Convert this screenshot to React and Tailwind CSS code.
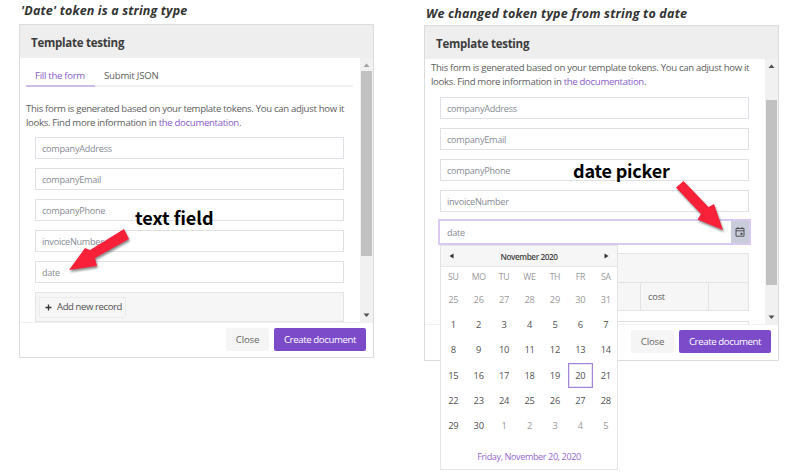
import clsx from "clsx";

const FIELDS = ["companyAddress", "companyEmail", "companyPhone", "invoiceNumber"];
const WEEKDAYS = ["SU", "MO", "TU", "WE", "TH", "FR", "SA"];

// October 25 .. December 5
const DAYS = [
  ...[25, 26, 27, 28, 29, 30, 31].map((day) => ({ day, other: true })),
  ...Array.from({ length: 30 }, (_, i) => ({ day: i + 1, other: false })),
  ...[1, 2, 3, 4, 5].map((day) => ({ day, other: true })),
];

function Field({ name }) {
  return (
    <div className="flex h-[22px] shrink-0 items-center border border-[#dfe0e5] bg-white pt-px pl-[6px] text-[9.1px] tracking-[-0.25px] text-[#868b94]">
      {name}
    </div>
  );
}

function Intro() {
  return (
    <p className="text-[9.6px] leading-[14px] tracking-[-0.32px] whitespace-nowrap text-[#606060]">
      <span className="block">
        This form is generated based on your template tokens. You can adjust how it
      </span>
      <span className="block">
        looks. Find more information in <a className="text-[#8a5cc9]">the documentation</a>.
      </span>
    </p>
  );
}

function Scrollbar({ top, upColor }) {
  return (
    <div className="flex w-[13px] shrink-0 flex-col bg-[#f1f1f1]">
      <svg viewBox="0 0 13 13" className="h-[13px] w-[13px] shrink-0">
        <path d="M3.5 9 L6.5 5.5 L9.5 9 Z" fill={upColor} />
      </svg>
      <div className={clsx("mx-px h-[185px] shrink-0 bg-[#c1c1c1]", top)} />
      <svg viewBox="0 0 13 13" className="mt-auto h-[13px] w-[13px] shrink-0">
        <path d="M3.5 4.5 L6.5 8 L9.5 4.5 Z" fill="#505050" />
      </svg>
    </div>
  );
}

function Footer() {
  return (
    <div className="flex flex-1 items-start justify-end gap-[5px] border-t border-[#f0f0f0] pt-[5px] pr-[7px]">
      <button className="h-[23px] w-[43px] rounded-[2px] bg-[#f5f5f5] pt-[2px] text-[9.7px] tracking-[-0.2px] text-[#666]">
        Close
      </button>
      <button className="h-[23px] w-[92px] rounded-[2px] bg-[#7b4bc9] pt-[2px] text-[9.7px] tracking-[-0.42px] whitespace-nowrap text-white">
        Create document
      </button>
    </div>
  );
}

function Window({ height, body, scroll, children }) {
  return (
    <div className={clsx("flex w-[355px] flex-col border border-[#dcdcdc] bg-white", height)}>
      <div className="flex h-[33px] shrink-0 items-center bg-[#eee] pt-[2px] pl-[11px] text-[11.5px] font-bold tracking-[-0.26px] text-[#3c3c3c]">
        Template testing
      </div>
      <div className={clsx("flex shrink-0 overflow-hidden", body)}>
        <div className="min-w-0 flex-1">{children}</div>
        {scroll}
      </div>
      <Footer />
    </div>
  );
}

function Calendar() {
  return (
    <div className="absolute top-[245px] left-[440px] flex h-[225px] w-[178px] flex-col border border-[#e4e4e4] bg-white">
      <div className="flex h-[21px] items-center justify-between border-b border-[#e8e8e8] bg-[#f6f6f6] px-[8px] text-[8.2px] text-[#444]">
        <svg viewBox="0 0 5 6" className="h-[6px] w-[5px]">
          <path d="M4.5 0.5 V5.5 L0.5 3 Z" fill="#333" />
        </svg>
        <span className="pt-px leading-[16px] font-semibold tracking-[-0.42px]">November 2020</span>
        <svg viewBox="0 0 5 6" className="h-[6px] w-[5px]">
          <path d="M0.5 0.5 V5.5 L4.5 3 Z" fill="#333" />
        </svg>
      </div>
      <div className="-ml-[0.5px] grid w-[178px] grid-cols-7 text-center text-[8.7px] leading-[20px] tracking-[-0.3px] text-[#999]">
        {WEEKDAYS.map((d) => (
          <span key={d}>{d}</span>
        ))}
      </div>
      <div className="-ml-[0.5px] grid h-[152px] w-[178px] grid-cols-7 grid-rows-6 text-[9.3px] tracking-[-0.25px]">
        {DAYS.map(({ day, other }, i) => (
          <span
            key={i}
            className={clsx(
              "flex items-center justify-center",
              other ? "text-[#999]" : "text-[#505050]",
              !other && day === 20 && "border border-[#a384d6] shadow-[inset_0_0_0_1px_#e9e1f5]"
            )}
          >
            {day}
          </span>
        ))}
      </div>
      <a className="mt-[8px] text-center text-[9.1px] leading-[20px] tracking-[-0.4px] text-[#9569cf]">Friday, November 20, 2020</a>
    </div>
  );
}

function RedArrow({ className, d, viewBox }) {
  return (
    <svg viewBox={viewBox} className={clsx("absolute drop-shadow-[1px_2px_1px_rgba(0,0,0,0.45)]", className)}>
      <path d={d} fill="#f9203a" />
    </svg>
  );
}

function Label({ className, children }) {
  return (
    <span
      className={clsx(
        "absolute font-['Noto_Sans_CJK_SC','Open_Sans',sans-serif] text-[18px] leading-[24px] font-bold whitespace-nowrap text-black",
        className
      )}
    >
      {children}
    </span>
  );
}

export default function App() {
  return (
    <div className="relative h-[475px] w-[800px] overflow-hidden bg-white font-['Open_Sans',sans-serif]">
      <div className="flex gap-[50px] pl-[19px]">
        {/* string token */}
        <section className="w-[355px]">
          <h2 className="h-[24px] pl-[2px] text-[12.5px] leading-[21px] font-bold tracking-[0.15px] whitespace-nowrap text-[#333] italic">
            'Date' token is a string type
          </h2>
          <Window
            height="h-[334px]"
            body="h-[264px]"
            scroll={<Scrollbar top="" upColor="#a3a3a3" />}
          >
            <div className="mr-[7px] ml-[6px] flex h-[29px] border-b-2 border-[#f1f1f1] text-[9.6px] leading-[35px]">
              <span className="-mb-[2px] w-[69px] border-b-2 border-[#cdbbe8] pl-[9px] tracking-[-0.29px] text-[#8a5cc9]">
                Fill the form
              </span>
              <span className="pl-[9px] tracking-[-0.2px] text-[#606060]">Submit JSON</span>
            </div>
            <div className="pt-[15px] pl-[6px]">
              <Intro />
            </div>
            <div className="mt-[7px] mr-[16px] ml-[15px] flex flex-col gap-[9px]">
              {FIELDS.map((f) => (
                <Field key={f} name={f} />
              ))}
              <Field name="date" />
              <div className="h-[30px] border border-[#e4e4e4] bg-[#f6f6f6] pt-[4px] pl-[3px]">
                <div className="flex h-[21px] w-[87px] items-center border border-[#ececec] pl-[5px] text-[9.5px] tracking-[-0.38px] whitespace-nowrap text-[#505050]">
                  <svg viewBox="0 0 7 7" className="mr-[5px] h-[7px] w-[7px]">
                    <path d="M3.5 0.5 V6.5 M0.5 3.5 H6.5" stroke="#333" strokeWidth="1.3" />
                  </svg>
                  Add new record
                </div>
              </div>
            </div>
          </Window>
        </section>

        {/* date token */}
        <section className="w-[355px]">
          <h2 className="h-[25px] pl-[2px] text-[12.5px] leading-[27px] font-bold tracking-[0.2px] whitespace-nowrap text-[#333] italic">
            We changed token type from string to date
          </h2>
          <Window
            height="h-[336px]"
            body="h-[265px]"
            scroll={<Scrollbar top="mt-[28px]" upColor="#505050" />}
          >
            <div className="pt-[2px] pl-[6px]">
              <Intro />
            </div>
            <div className="mt-[8px] mr-[16px] ml-[15px] flex flex-col gap-[9px]">
              {FIELDS.map((f) => (
                <Field key={f} name={f} />
              ))}
            </div>
            <div className="mt-[7px] mr-[14px] ml-[13px] flex h-[26px] border-2 border-[#d8caee] text-[9.1px] tracking-[-0.25px] text-[#868b94]">
              <span className="flex flex-1 items-center pt-px pl-[7px]">date</span>
              <span className="flex w-[18px] items-center justify-center bg-[#c9ccdb]">
                <svg viewBox="0 0 10 10" className="h-[10px] w-[10px]" fill="none" stroke="#444" strokeWidth="0.9">
                  <path d="M1 1.5 H9 V9.2 H1 Z M1 3.8 H9 M3 0 V2 M7 0 V2" />
                  <path d="M5.5 5.8 H7.5 V7.8 H5.5 Z" fill="#444" stroke="none" />
                </svg>
              </span>
            </div>
            <div className="mt-[8px] mr-[16px] ml-[15px] h-[58px] border border-[#e4e4e4] bg-[#f6f6f6]">
              <div className="h-[28px]" />
              <div className="flex h-[28px] items-center border-t border-[#e4e4e4] text-[9.2px] tracking-[-0.15px] text-[#606060]">
                <span className="w-[199px]" />
                <span className="flex h-full w-[69px] items-center border-x border-[#e4e4e4] pt-px pl-[7px]">cost</span>
              </div>
            </div>
            <div className="mt-[10px] mr-[16px] ml-[15px] h-[22px] border border-[#dfe0e5]" />
          </Window>
        </section>
      </div>

      <Calendar />

      <Label className="top-[205px] left-[135px]">text field</Label>
      <RedArrow
        className="top-[229px] left-[69px] h-[42px] w-[62px]"
        viewBox="69 229 62 42"
        d="M124 229 L129 239 L95 258 L97 266 L69 270 L85 248 L90 250 Z"
      />
      <Label className="top-[158px] left-[573px] tracking-[-0.2px]">date picker</Label>
      <RedArrow
        className="top-[181px] left-[676px] h-[50px] w-[48px]"
        viewBox="676 181 48 50"
        d="M683.5 181 L676 187.5 L701 214 L697.5 219.5 L723 230 L714 204 L708.5 207 Z"
      />
    </div>
  );
}
